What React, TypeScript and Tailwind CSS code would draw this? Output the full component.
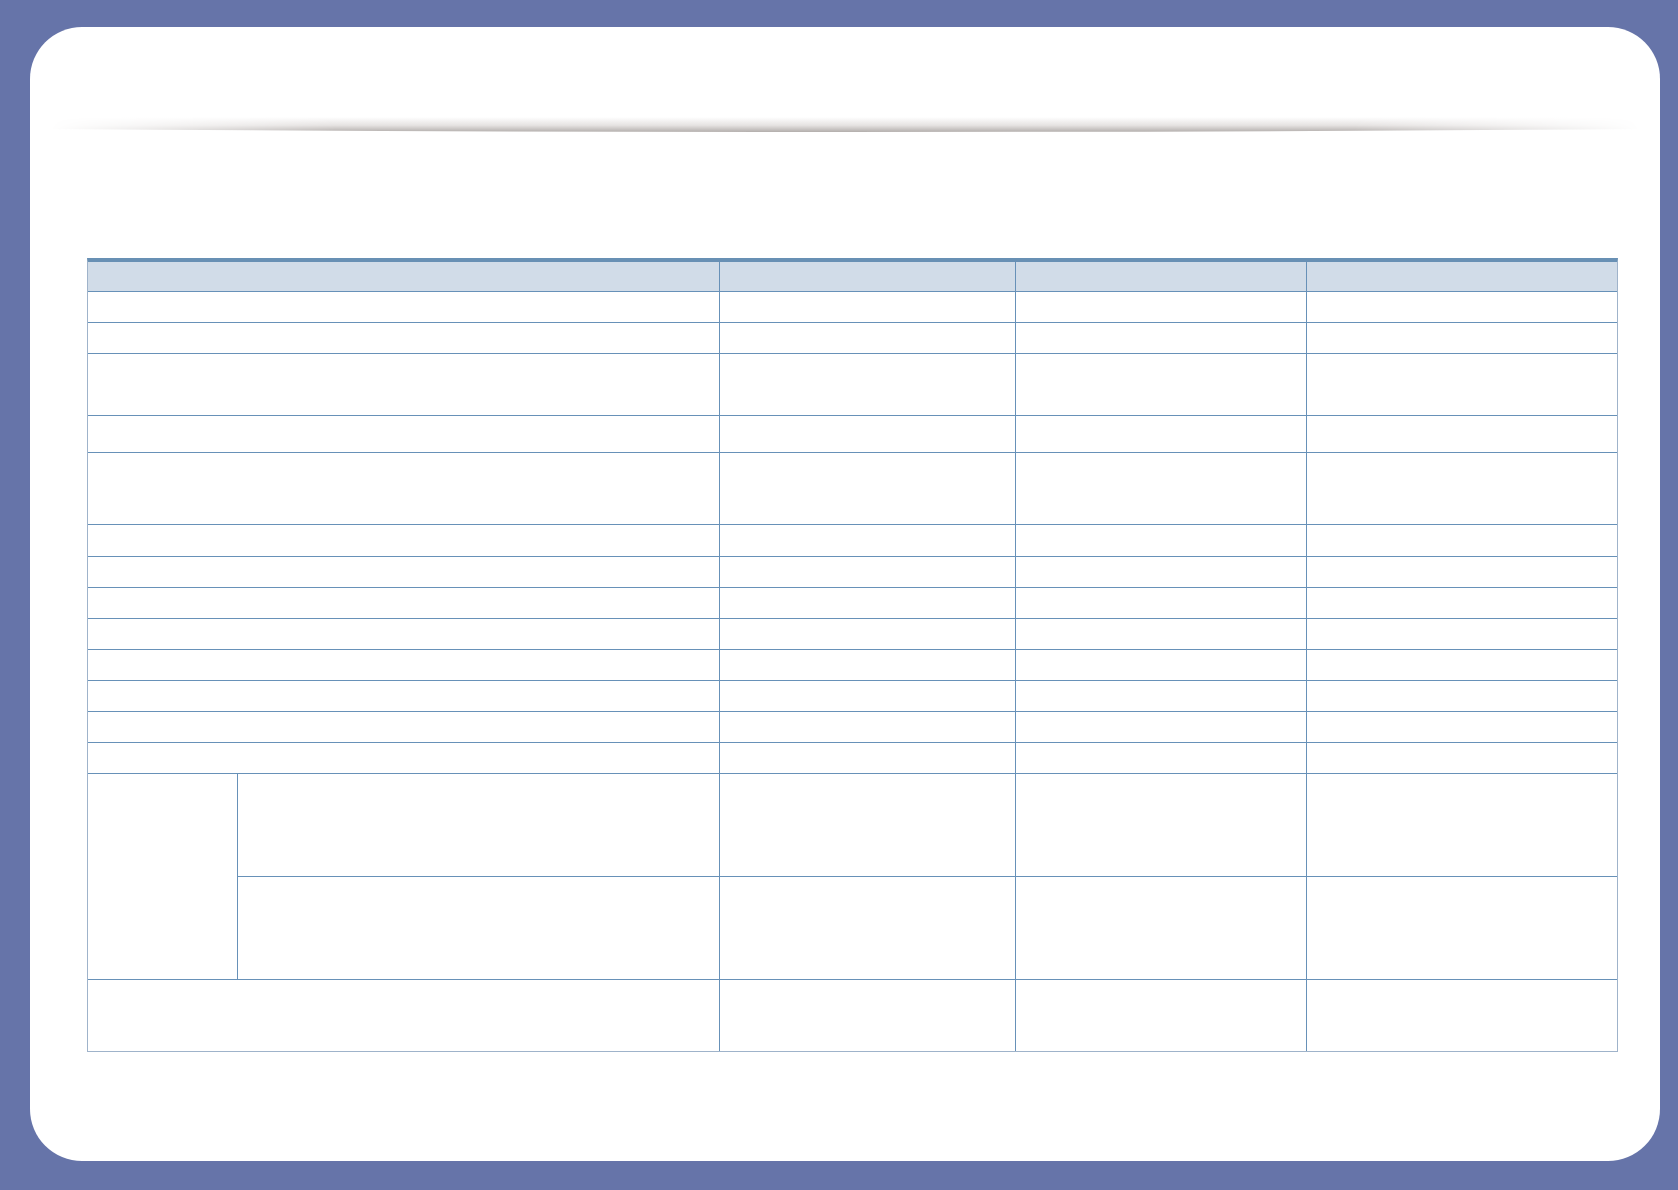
import type { ReactNode } from "react";

// row heights include the bottom rule
const topRows = [31, 31, 62, 37, 72, 32, 31, 31, 31, 31, 31, 31, 31];

function Cells({ first }: { first: ReactNode }) {
  return (
    <>
      {first}
      <div className="w-[296px] shrink-0 border-l border-[#6791b8]" />
      <div className="w-[291px] shrink-0 border-l border-[#6791b8]" />
      <div className="flex-1 border-l border-[#6791b8]" />
    </>
  );
}

function Row({ height, last = false }: { height: number; last?: boolean }) {
  return (
    <div
      className={last ? "flex" : "flex border-b border-[#6791b8]"}
      style={{ height }}
    >
      <Cells first={<div className="w-[631px] shrink-0" />} />
    </div>
  );
}

export default function App() {
  return (
    <div className="flex h-[1190px] w-full bg-[#6674a9] pb-[29px] pl-[30px] pr-[27px] pt-[27px]">
      <div className="flex flex-1 flex-col rounded-[52px] bg-white pt-[90px]">
        <svg className="mx-[20px] h-[15px] w-[1590px]" viewBox="0 0 1590 15" preserveAspectRatio="none">
          <defs>
            <linearGradient id="swoosh-v" x1="0" y1="0" x2="0" y2="1">
              <stop offset="0" stopColor="#ffffff" />
              <stop offset="0.55" stopColor="#e6e3e2" />
              <stop offset="1" stopColor="#b3aeac" />
            </linearGradient>
            <linearGradient id="swoosh-h" x1="0" y1="0" x2="1" y2="0">
              <stop offset="0" stopColor="#fff" stopOpacity="0" />
              <stop offset="0.18" stopColor="#fff" stopOpacity="1" />
              <stop offset="0.82" stopColor="#fff" stopOpacity="1" />
              <stop offset="1" stopColor="#fff" stopOpacity="0" />
            </linearGradient>
            <mask id="swoosh-m">
              <rect x="0" y="0" width="1590" height="15" fill="url(#swoosh-h)" />
            </mask>
          </defs>
          <path d="M0 12 Q795 18 1590 12 L1590 0 L0 0 Z" fill="url(#swoosh-v)" mask="url(#swoosh-m)" />
        </svg>

        <div className="ml-[57px] mt-[126px] flex w-[1531px] flex-col border-x border-b border-x-[#9fb3ca] border-b-[#9fb3ca] border-t-4 border-t-[#6890b4]">
          <div className="flex h-[30px] border-b border-[#6791b8] bg-[#d1dce8]">
            <Cells first={<div className="w-[631px] shrink-0" />} />
          </div>

          {topRows.map((h, i) => (
            <Row key={i} height={h} />
          ))}

          <div className="flex h-[206px] border-b border-[#6791b8]">
            <div className="w-[149px] shrink-0" />
            <div className="flex flex-1 flex-col border-l border-[#6791b8]">
              <div className="flex h-[103px] border-b border-[#6791b8]">
                <Cells first={<div className="w-[481px] shrink-0" />} />
              </div>
              <div className="flex h-[102px]">
                <Cells first={<div className="w-[481px] shrink-0" />} />
              </div>
            </div>
          </div>

          <Row height={71} last />
        </div>
      </div>
    </div>
  );
}
